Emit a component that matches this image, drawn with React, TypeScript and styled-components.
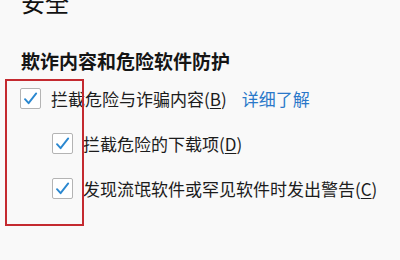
import styled, { createGlobalStyle } from "styled-components";

const GlobalStyle = createGlobalStyle`
  html, body {
    margin: 0;
    padding: 0;
    background: #f9f9f9;
  }
  body {
    font-family: "Noto Sans CJK SC", "Noto Sans", sans-serif;
    color: #1e1e1e;
  }
`;

interface optionItem {
  label: string;
  key: string;
  indent: boolean;
  link?: string;
}

const options: optionItem[] = [
  { label: "拦截危险与诈骗内容", key: "B", indent: false, link: "详细了解" },
  { label: "拦截危险的下载项", key: "D", indent: true },
  { label: "发现流氓软件或罕见软件时发出警告", key: "C", indent: true },
];

const CheckIcon = () => (
  <svg width="15" height="15" viewBox="0 0 15 15">
    <path
      d="M2 8.2 L5.6 12.2 L13.2 2.4"
      fill="none"
      stroke="#2b88d0"
      strokeWidth="1.9"
      strokeLinecap="round"
      strokeLinejoin="round"
    />
  </svg>
);

const App = () => {
  return (
    <Page>
      <GlobalStyle />
      <Title>安全</Title>
      <Heading>欺诈内容和危险软件防护</Heading>
      <OptionList>
        {options.map((item, i) => (
          <Row key={i} $indent={item.indent}>
            <Box>
              <CheckIcon />
            </Box>
            <Label>
              {item.label}(<u>{item.key}</u>)
            </Label>
            {item.link && <MoreLink href="#">{item.link}</MoreLink>}
          </Row>
        ))}
      </OptionList>
      <Highlight />
    </Page>
  );
};

const Page = styled.div`
  position: relative;
  width: 400px;
  height: 260px;
  overflow: hidden;
  padding-left: 20px;
  box-sizing: border-box;
`;

const Title = styled.div`
  font-size: 24px;
  line-height: 30px;
  margin-top: -13px;
  padding-left: 1px;
  color: #111;
`;

const Heading = styled.h2`
  margin: 31px 0 0;
  padding-left: 1px;
  font-size: 19px;
  line-height: 26px;
  font-weight: bold;
  color: #151515;
`;

const OptionList = styled.div`
  display: flex;
  flex-direction: column;
  margin-top: 2px;
`;

const Row = styled.div<{ $indent: boolean }>`
  display: flex;
  align-items: center;
  height: 45px;
  padding-left: ${(p) => (p.$indent ? "32px" : "0")};
`;

const Box = styled.span`
  width: 19px;
  height: 19px;
  border: 1px solid #b4b4b4;
  border-radius: 2px;
  background: #fff;
  display: flex;
  align-items: center;
  justify-content: center;
  flex-shrink: 0;
`;

const Label = styled.span`
  margin-left: 10px;
  font-size: 17px;
  line-height: 22px;
  color: #1c1c1c;
  white-space: nowrap;

  u {
    text-underline-offset: 2px;
  }
`;

const MoreLink = styled.a`
  margin-left: 15px;
  font-size: 17px;
  line-height: 22px;
  color: #2a78c9;
  text-decoration: none;
  white-space: nowrap;
`;

const Highlight = styled.div`
  position: absolute;
  left: 5px;
  top: 79px;
  width: 75px;
  height: 143px;
  border: 2px solid #c42a30;
`;

export default App;
